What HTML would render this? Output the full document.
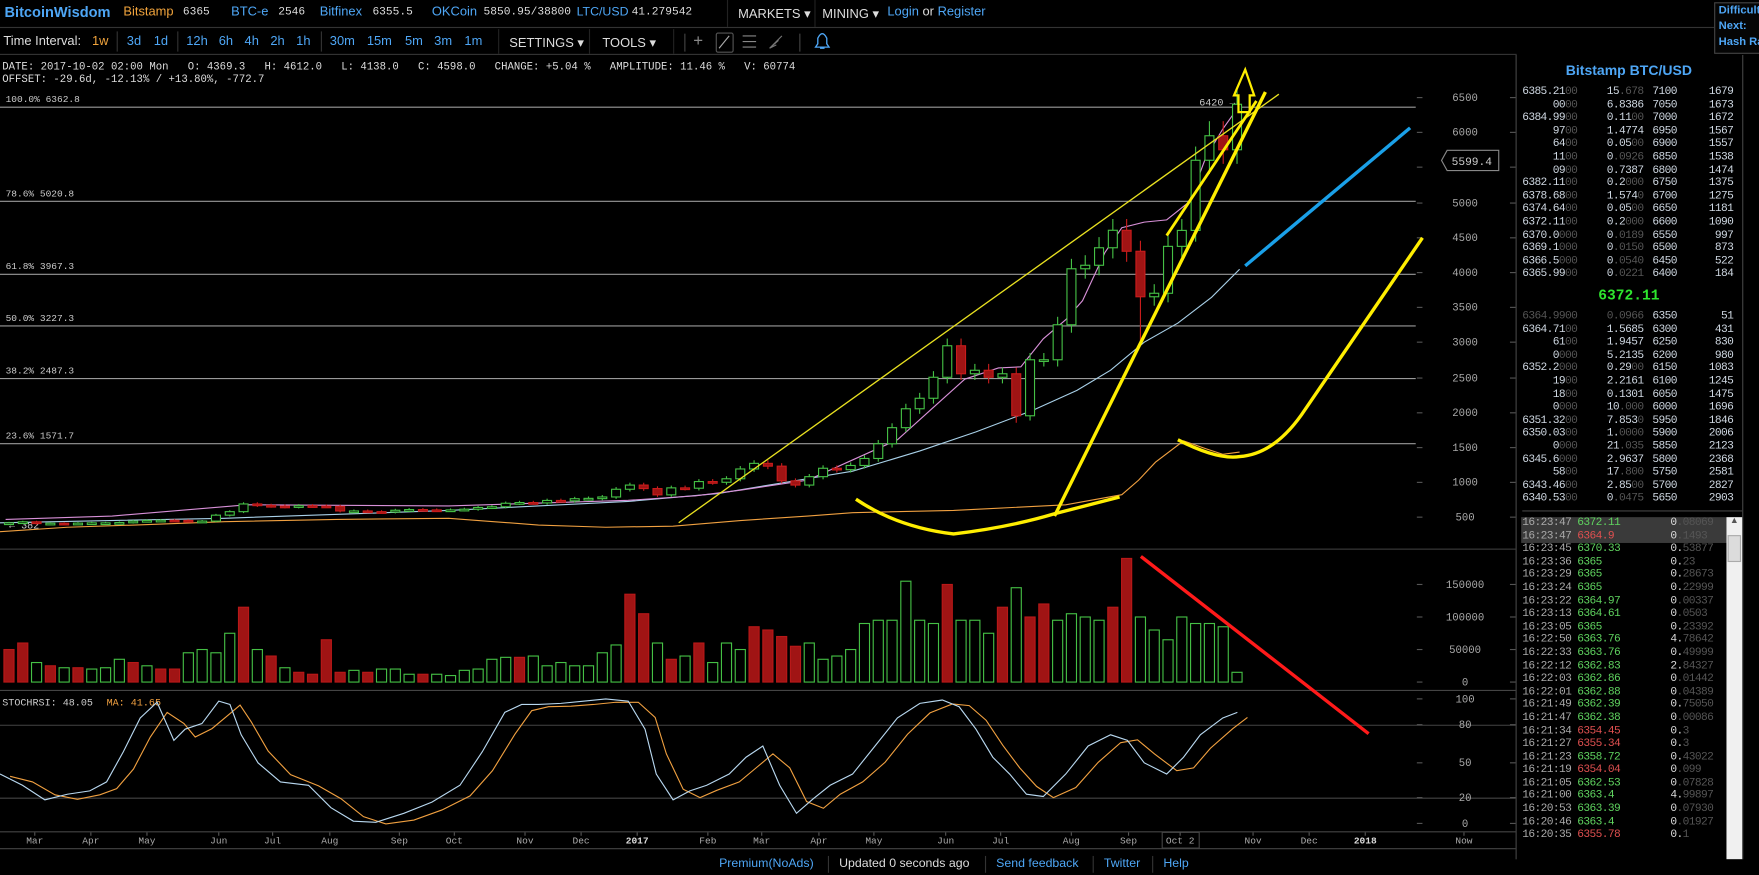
<!DOCTYPE html>
<html><head><meta charset="utf-8"><style>
html,body{margin:0;padding:0;background:#000;width:1759px;height:875px;overflow:hidden}
#w{position:absolute;left:0;top:0;width:1568px;height:780px;transform:scale(1.12181);transform-origin:0 0;background:#000;font-family:"Liberation Sans",sans-serif;color:#ddd;overflow:hidden}
.a{position:absolute;white-space:pre}
.b{color:#4ea6f5}
.m{font-family:"Liberation Mono",monospace}
.t1{font-size:11.5px;top:5px}
.n1{font-family:"Liberation Mono",monospace;font-size:10px;top:6px}
.t2{font-size:11.5px;top:31px}
.ob{position:absolute;font-family:"Liberation Mono",monospace;font-size:10px;letter-spacing:-0.55px;color:#cfd8e2;line-height:11.6px}
.d{color:#555}
.g{color:#5fd35f}.r{color:#e05050}
</style></head><body><div id="w">
<div class="a" style="left:0;top:24px;width:1568px;height:1px;background:#333"></div>
<div class="a" style="left:0;top:48px;width:1352px;height:1px;background:#333"></div>
<div class="a b" style="left:4px;top:3px;font-size:13px;font-weight:bold">BitcoinWisdom</div>
<div class="a t1" style="left:110px;color:#f0a33c">Bitstamp</div><div class="a n1" style="left:163px">6365</div>
<div class="a t1 b" style="left:206px">BTC-e</div><div class="a n1" style="left:248px">2546</div>
<div class="a t1 b" style="left:285px">Bitfinex</div><div class="a n1" style="left:332px">6355.5</div>
<div class="a t1 b" style="left:385px">OKCoin</div><div class="a n1" style="left:431px">5850.95/38800</div>
<div class="a t1 b" style="left:514px;font-size:11px">LTC/USD</div><div class="a n1" style="left:563px">41.279542</div>
<div class="a" style="left:648px;top:0;width:1px;height:24px;background:#222"></div>
<div class="a t1" style="left:658px">MARKETS ▾</div>
<div class="a" style="left:726px;top:0;width:1px;height:24px;background:#222"></div>
<div class="a t1" style="left:733px">MINING ▾</div>
<div class="a t1" style="left:791px"><span class="b">Login</span> or <span class="b">Register</span></div>
<div class="a" style="left:1528px;top:2px;width:40px;height:44px;border:1px solid #444;background:#050505"></div>
<div class="a b" style="left:1532px;top:3px;font-size:10px;font-weight:bold;line-height:14px">Difficult<br>Next:<br>Hash Ra</div>

<div class="a t2" style="left:3px">Time Interval:</div>
<div class="a t2" style="left:82px;color:#f0a33c">1w</div>
<div class="a" style="left:104px;top:28px;width:1px;height:18px;background:#333"></div>
<div class="a t2 b" style="left:113px">3d</div><div class="a t2 b" style="left:137px">1d</div>
<div class="a" style="left:158px;top:28px;width:1px;height:18px;background:#333"></div>
<div class="a t2 b" style="left:166px">12h</div><div class="a t2 b" style="left:195px">6h</div><div class="a t2 b" style="left:218px">4h</div><div class="a t2 b" style="left:241px">2h</div><div class="a t2 b" style="left:264px">1h</div>
<div class="a" style="left:286px;top:28px;width:1px;height:18px;background:#333"></div>
<div class="a t2 b" style="left:294px">30m</div><div class="a t2 b" style="left:327px">15m</div><div class="a t2 b" style="left:361px">5m</div><div class="a t2 b" style="left:387px">3m</div><div class="a t2 b" style="left:414px">1m</div>
<div class="a" style="left:444px;top:26px;width:1px;height:22px;background:#222"></div>
<div class="a t2" style="left:454px">SETTINGS ▾</div>
<div class="a" style="left:525px;top:26px;width:1px;height:22px;background:#222"></div>
<div class="a t2" style="left:537px">TOOLS ▾</div>
<div class="a" style="left:600px;top:26px;width:1px;height:22px;background:#222"></div>
<div class="a" style="left:610px;top:30px;width:1px;height:16px;background:#444"></div>
<div class="a" style="left:618px;top:28px;font-size:15px;color:#888">+</div>
<div class="a" style="left:638px;top:29px;width:14px;height:16px;border:1px solid #555;border-radius:2px"></div>
<svg class="a" style="left:0;top:0" width="760" height="48"><line x1="641" y1="43" x2="650" y2="32" stroke="#aaa"/><g stroke="#888"><line x1="662" y1="32" x2="674" y2="32"/><line x1="662" y1="37" x2="674" y2="37"/><line x1="662" y1="42" x2="674" y2="42"/></g><path d="M686 43 L697 32 M686 43 L694 36 M686 43 L692 40" stroke="#777" fill="none"/><line x1="713" y1="30" x2="713" y2="46" stroke="#444"/><path d="M727 42 L729 39 L729 34 Q731 30 733 30 Q735 30 737 34 L737 39 L739 42 Z M731 43 L735 43" stroke="#4ea6f5" fill="none" stroke-width="1.2"/></svg>

<div class="a m" style="left:2px;top:54px;font-size:9.5px;color:#ddd">DATE: 2017-10-02 02:00 Mon   O: 4369.3   H: 4612.0   L: 4138.0   C: 4598.0   CHANGE: +5.04 %   AMPLITUDE: 11.46 %   V: 60774</div>
<div class="a m" style="left:2px;top:65px;font-size:9.5px;color:#ddd">OFFSET: -29.6d, -12.13% / +13.80%, -772.7</div>

<svg id="ch" class="a" style="left:0;top:0" width="1568" height="780" font-family="Liberation Mono, monospace">
<g stroke="#9a9a9a" stroke-width="1">
<line x1="0" y1="95.5" x2="1262" y2="95.5"/><line x1="0" y1="179.5" x2="1262" y2="179.5"/><line x1="0" y1="244.5" x2="1262" y2="244.5"/><line x1="0" y1="290.5" x2="1262" y2="290.5"/><line x1="0" y1="337.5" x2="1262" y2="337.5"/><line x1="0" y1="395.5" x2="1262" y2="395.5"/>
</g>
<g fill="#ccc" font-size="8.5">
<text x="5" y="91">100.0% 6362.8</text><text x="5" y="175">78.6% 5020.8</text><text x="5" y="240">61.8% 3967.3</text><text x="5" y="286">50.0% 3227.3</text><text x="5" y="333">38.2% 2487.3</text><text x="5" y="391">23.6% 1571.7</text>
</g>
<g stroke="#444"><line x1="0" y1="489.5" x2="1351" y2="489.5"/><line x1="0" y1="615.5" x2="1351" y2="615.5"/><line x1="0" y1="646.5" x2="1351" y2="646.5"/><line x1="0" y1="711.5" x2="1351" y2="711.5"/><line x1="0" y1="741.5" x2="1351" y2="741.5"/><line x1="0" y1="756.5" x2="1351" y2="756.5"/>
<line x1="1351.5" y1="49" x2="1351.5" y2="780"/><line x1="1553.5" y1="49" x2="1553.5" y2="780"/><line x1="1357" y1="455.5" x2="1553" y2="455.5"/></g>
<g fill="#aaa" font-size="9.5" text-anchor="middle">
<text x="1306" y="90">6500</text><text x="1306" y="121">6000</text><text x="1306" y="184">5000</text><text x="1306" y="215">4500</text><text x="1306" y="246">4000</text><text x="1306" y="277">3500</text><text x="1306" y="308">3000</text><text x="1306" y="340">2500</text><text x="1306" y="371">2000</text><text x="1306" y="402">1500</text><text x="1306" y="433">1000</text><text x="1306" y="464">500</text>
<text x="1306" y="524">150000</text><text x="1306" y="553">100000</text><text x="1306" y="582">50000</text><text x="1306" y="611">0</text>
<text x="1306" y="626">100</text><text x="1306" y="649">80</text><text x="1306" y="683">50</text><text x="1306" y="714">20</text><text x="1306" y="737">0</text>
</g>
<g fill="#aaa" font-size="8.5" text-anchor="middle">
<text x="31" y="752">Mar</text><text x="81" y="752">Apr</text><text x="131" y="752">May</text><text x="195" y="752">Jun</text><text x="243" y="752">Jul</text><text x="294" y="752">Aug</text><text x="356" y="752">Sep</text><text x="405" y="752">Oct</text><text x="468" y="752">Nov</text><text x="518" y="752">Dec</text><text x="568" y="752" font-weight="bold" fill="#ddd">2017</text><text x="631" y="752">Feb</text><text x="679" y="752">Mar</text><text x="730" y="752">Apr</text><text x="779" y="752">May</text><text x="843" y="752">Jun</text><text x="892" y="752">Jul</text><text x="955" y="752">Aug</text><text x="1006" y="752">Sep</text><text x="1052" y="752">Oct 2</text><text x="1117" y="752">Nov</text><text x="1167" y="752">Dec</text><text x="1217" y="752" font-weight="bold" fill="#ddd">2018</text><text x="1305" y="752">Now</text>
</g>
<rect x="1036" y="742" width="33" height="14" fill="none" stroke="#444"/>
<g fill="#ccc" font-size="9">
<text x="2" y="629">STOCHRSI: 48.05</text><text x="95" y="629" fill="#f0a040">MA: 41.65</text>
<text x="1069" y="94">6420 →</text><text x="8" y="471">← 382</text>
</g>
<polygon points="1285,143 1290,134 1336,134 1336,152 1290,152" fill="#000" stroke="#888"/>
<text x="1312" y="147" fill="#ccc" font-size="10" text-anchor="middle">5599.4</text>
<g id="dyn"></g>
</svg>

<div class="a b" style="left:1351px;width:202px;text-align:center;top:56px;font-size:12.5px;font-weight:bold">Bitstamp BTC/USD</div>
<div class="ob" style="left:1354px;top:77px;width:52px;text-align:right">6385.21<span class="d">00</span><br>00<span class="d">00</span><br>6384.99<span class="d">00</span><br>97<span class="d">00</span><br>64<span class="d">00</span><br>11<span class="d">00</span><br>09<span class="d">00</span><br>6382.11<span class="d">00</span><br>6378.68<span class="d">00</span><br>6374.64<span class="d">00</span><br>6372.11<span class="d">00</span><br>6370.0<span class="d">000</span><br>6369.1<span class="d">000</span><br>6366.5<span class="d">000</span><br>6365.99<span class="d">00</span></div>
<div class="ob" style="left:1420px;top:77px;width:45px;text-align:right">15<span class="d">.678</span><br>6.8386<br>0.11<span class="d">00</span><br>1.4774<br>0.05<span class="d">00</span><br>0<span class="d">.0926</span><br>0.7387<br>0.2<span class="d">000</span><br>1.574<span class="d">0</span><br>0.05<span class="d">00</span><br>0.2<span class="d">000</span><br>0<span class="d">.0189</span><br>0<span class="d">.0150</span><br>0<span class="d">.0540</span><br>0<span class="d">.0221</span></div>
<div class="ob" style="left:1473px;top:77px">7100<br>7050<br>7000<br>6950<br>6900<br>6850<br>6800<br>6750<br>6700<br>6650<br>6600<br>6550<br>6500<br>6450<br>6400</div>
<div class="ob" style="left:1500px;top:77px;width:45px;text-align:right">1679<br>1673<br>1672<br>1567<br>1557<br>1538<br>1474<br>1375<br>1275<br>1181<br>1090<br>997<br>873<br>522<br>184</div>
<div class="a" style="left:1351px;width:202px;text-align:center;top:256px;font-size:13px;font-weight:bold;color:#2ee62e;font-family:'Liberation Mono',monospace">6372.11</div>
<div class="ob" style="left:1354px;top:277px;width:52px;text-align:right"><span class="d">6364.9900</span><br>6364.71<span class="d">00</span><br>61<span class="d">00</span><br>0<span class="d">000</span><br>6352.2<span class="d">000</span><br>19<span class="d">00</span><br>18<span class="d">00</span><br>0<span class="d">000</span><br>6351.32<span class="d">00</span><br>6350.03<span class="d">00</span><br>0<span class="d">000</span><br>6345.6<span class="d">000</span><br>58<span class="d">00</span><br>6343.46<span class="d">00</span><br>6340.53<span class="d">00</span></div>
<div class="ob" style="left:1420px;top:277px;width:45px;text-align:right"><span class="d">0.0966</span><br>1.5685<br>1.9457<br>5.2135<br>0.29<span class="d">00</span><br>2.2161<br>0.1301<br>10<span class="d">.000</span><br>7.853<span class="d">0</span><br>1.<span class="d">0000</span><br>21<span class="d">.035</span><br>2.9637<br>17<span class="d">.800</span><br>2.85<span class="d">00</span><br>0<span class="d">.0475</span></div>
<div class="ob" style="left:1473px;top:277px">6350<br>6300<br>6250<br>6200<br>6150<br>6100<br>6050<br>6000<br>5950<br>5900<br>5850<br>5800<br>5750<br>5700<br>5650</div>
<div class="ob" style="left:1500px;top:277px;width:45px;text-align:right">51<br>431<br>830<br>980<br>1083<br>1245<br>1475<br>1696<br>1846<br>2006<br>2123<br>2368<br>2581<br>2827<br>2903</div>

<div class="a" style="left:1356px;top:461px;width:183px;height:23px;background:#3a3a3a"></div>
<div class="a" style="left:1539px;top:461px;width:14px;height:305px;background:#f0f0f0"></div>
<div class="a" style="left:1540px;top:477px;width:12px;height:24px;background:#dcdcdc;border:1px solid #aaa;box-sizing:border-box"></div>
<div class="a" style="left:1542px;top:459px;font-size:8px;color:#555">▲</div>
<div class="ob" style="left:1357px;top:461px;color:#aaa">16:23:47<br>16:23:47<br>16:23:45<br>16:23:36<br>16:23:29<br>16:23:24<br>16:23:22<br>16:23:13<br>16:23:05<br>16:22:50<br>16:22:33<br>16:22:12<br>16:22:03<br>16:22:01<br>16:21:49<br>16:21:47<br>16:21:34<br>16:21:27<br>16:21:23<br>16:21:19<br>16:21:05<br>16:21:00<br>16:20:53<br>16:20:46<br>16:20:35</div>
<div class="ob" style="left:1406px;top:461px"><span class="g">6372.11</span><br><span class="r">6364.9</span><br><span class="g">6370.33</span><br><span class="g">6365</span><br><span class="g">6365</span><br><span class="g">6365</span><br><span class="g">6364.97</span><br><span class="g">6364.61</span><br><span class="g">6365</span><br><span class="g">6363.76</span><br><span class="g">6363.76</span><br><span class="g">6362.83</span><br><span class="g">6362.86</span><br><span class="g">6362.88</span><br><span class="g">6362.39</span><br><span class="g">6362.38</span><br><span class="r">6354.45</span><br><span class="r">6355.34</span><br><span class="g">6358.72</span><br><span class="r">6354.04</span><br><span class="g">6362.53</span><br><span class="g">6363.4</span><br><span class="g">6363.39</span><br><span class="g">6363.4</span><br><span class="r">6355.78</span></div>
<div class="ob" style="left:1489px;top:461px;color:#ddd">0<span class="d">.08069</span><br>0<span class="d">.1493</span><br>0.<span class="d">53877</span><br>0.<span class="d">23</span><br>0.<span class="d">28673</span><br>0.<span class="d">22999</span><br>0<span class="d">.00337</span><br>0<span class="d">.0503</span><br>0.<span class="d">23392</span><br>4.<span class="d">78642</span><br>0.<span class="d">49999</span><br>2.<span class="d">84327</span><br>0<span class="d">.01442</span><br>0<span class="d">.04389</span><br>0.<span class="d">75050</span><br>0<span class="d">.00086</span><br>0.<span class="d">3</span><br>0.<span class="d">3</span><br>0.<span class="d">43022</span><br>0<span class="d">.099</span><br>0<span class="d">.07828</span><br>4.<span class="d">99897</span><br>0<span class="d">.07930</span><br>0<span class="d">.01927</span><br>0.<span class="d">1</span></div>
<div class="a" style="left:0;top:766px;width:1568px;height:14px;background:#000"></div>

<div class="a" style="top:764px;left:641px;font-size:11px"><span class="b">Premium(NoAds)</span></div>
<div class="a" style="top:763px;left:738px;width:1px;height:15px;background:#333"></div>
<div class="a" style="top:764px;left:748px;font-size:11px;color:#ddd">Updated 0 seconds ago</div>
<div class="a" style="top:763px;left:878px;width:1px;height:15px;background:#333"></div>
<div class="a b" style="top:764px;left:888px;font-size:11px">Send feedback</div>
<div class="a" style="top:763px;left:974px;width:1px;height:15px;background:#333"></div>
<div class="a b" style="top:764px;left:984px;font-size:11px">Twitter</div>
<div class="a" style="top:763px;left:1027px;width:1px;height:15px;background:#333"></div>
<div class="a b" style="top:764px;left:1037px;font-size:11px">Help</div>

<script>
(function(){
var g=document.getElementById("dyn"),h="";
function Y(p){return 86.7+(6500-p)*0.0624}
function X(i){return 8+i*12.3}
var c=[420,435,410,415,412,416,420,420,425,445,455,458,455,442,445,530,580,690,670,660,650,665,660,655,590,590,580,575,600,610,605,600,605,615,640,650,700,710,705,740,735,765,770,790,900,960,
910,820,920,915,1010,1000,1050,1190,1270,1230,1020,960,1080,1200,1180,1240,1340,1550,1780,2050,2200,2500,2950,2550,2600,2500,2550,1950,2750,2750,3250,4050,4100,4350,4600,4300,3650,3700,4370,4598,5600,5950,5750,6400];
var tk="";
[31,81,131,195,243,294,356,405,468,518,568,631,679,730,779,843,892,955,1006,1052,1117,1167,1217,1305].forEach(function(x){tk+='<line x1="'+x+'" y1="742" x2="'+x+'" y2="745" stroke="#555"/>'});
[87,118,149,181,212,243,274,305,337,368,399,430,461,521,550,579,608,623,646,680,711,734].forEach(function(y){tk+='<line x1="1263" y1="'+y+'" x2="1268" y2="'+y+'" stroke="#555"/><line x1="1346" y1="'+y+'" x2="1351" y2="'+y+'" stroke="#555"/>'});
h+=tk;
h+='<polyline fill="none" stroke="#f0a040" stroke-width="1" points="0,474 60,470 120,468 200,465 300,463 400,462 440,465 480,468 540,470 600,469 660,464 720,460 760,457 850,455 950,450 1000,441 1015,428 1030,412 1055,393 1075,400 1090,405 1105,403"/>';
h+='<polyline fill="none" stroke="#a8d0e8" stroke-width="1" points="0,466 200,462 400,455 560,447 640,440 700,430 760,420 820,402 870,385 920,366 960,348 990,330 1020,305 1050,288 1080,265 1105,240"/>';
h+='<polyline fill="none" stroke="#d890d8" stroke-width="1" points="5,463 100,460 220,450 400,451 560,446 620,442 660,437 720,428 760,410 800,392 830,365 860,338 890,328 910,327 930,302 950,285 965,268 985,225 1000,203 1020,198 1040,196 1060,180 1075,140 1090,115 1105,94"/>';
for(var i=0;i<c.length;i++){var o=i?c[i-1]:415,cl=c[i],x=X(i),up=cl>=o;
 var hi=Math.max(o,cl)*1.035,lo=Math.min(o,cl)*0.965;if(i==82)lo=3000;if(i==73)lo=1850;
 var col=up?"#45c045":"#c81c1c";
 h+='<line x1="'+x+'" y1="'+Y(hi)+'" x2="'+x+'" y2="'+Y(lo)+'" stroke="'+col+'"/>';
 var t=Y(Math.max(o,cl)),bh=Math.max(1.5,Y(Math.min(o,cl))-t);
 h+='<rect x="'+(x-4)+'" y="'+t+'" width="8" height="'+bh+'" fill="'+(up?"#000":"#a01414")+'" stroke="'+col+'"/>';}
var v=[50,60,30,25,22,22,20,22,35,30,25,20,20,45,50,45,75,115,50,40,22,15,12,65,15,18,15,20,20,12,12,12,10,18,20,35,38,38,40,25,30,25,25,45,
57,135,105,60,35,40,60,30,60,50,85,80,70,55,60,35,40,50,90,95,95,155,95,90,150,95,95,75,115,145,100,120,95,105,100,95,115,190,100,80,65,100,90,90,85,15];
var red={0:1,1:1,3:1,5:1,9:1,11:1,12:1,17:1,19:1,21:1,22:1,23:1,24:1,26:1,30:1,37:1,45:1,46:1,48:1,50:1,54:1,55:1,56:1,57:1,68:1,72:1,74:1,75:1,80:1,81:1};
for(var i=0;i<v.length;i++){var x=X(i),hh=v[i]*0.58;
 h+='<rect x="'+(x-4.5)+'" y="'+(608-hh)+'" width="9" height="'+hh+'" fill="'+(red[i]?"#a01414":"#000")+'" stroke="'+(red[i]?"#b81818":"#45c045")+'"/>';}
var s=[[0,690],[20,700],[40,713],[60,708],[80,705],[95,697],[110,670],[125,640],[140,626],[155,660],[165,650],[180,645],[195,625],[205,628],[215,655],[230,680],[250,697],[275,700],[295,720],[315,732],[335,733],[360,725],[385,715],[410,700],[430,670],[450,635],[465,628],[480,628],[500,627],[520,625],[540,623],[560,625],[575,650],[585,690],[600,713],[615,705],[630,700],[650,690],[665,675],[680,665],[695,700],[710,725],[725,712],[740,700],[760,690],[780,665],[800,640],[820,627],[840,624],[855,630],[870,650],[885,675],[900,690],[915,708],[930,710],[950,690],[970,665],[990,655],[1005,660],[1020,680],[1040,690],[1055,675],[1070,655],[1090,640],[1103,635]];
var p1="",p2="";s.forEach(function(q,k){p1+=q[0]+","+q[1]+" ";var qy=q[1];if(k>0)qy=(q[1]+s[k-1][1])/2;p2+=(q[0]+9)+","+(qy+2)+" ";});
h+='<polyline fill="none" stroke="#f0a040" points="'+p2+'"/><polyline fill="none" stroke="#b8d8f0" points="'+p1+'"/>';
h+='<line x1="605" y1="466" x2="1140" y2="84" stroke="#e8e020" stroke-width="1.2"/>';
h+='<line x1="940" y1="460" x2="1128" y2="82" stroke="#ffee00" stroke-width="3"/>';
h+='<line x1="1040" y1="210" x2="1120" y2="90" stroke="#ffee00" stroke-width="2.5"/>';
h+='<path d="M763 445 Q800 470 850 476 Q900 470 940 458 L998 443" fill="none" stroke="#ffee00" stroke-width="3"/>';
h+='<path d="M1050 392 Q1085 410 1105 407 Q1135 405 1160 370 Q1215 290 1268 212" fill="none" stroke="#ffee00" stroke-width="3"/>';
h+='<path d="M1104 100 L1104 85 L1100 85 L1110 62 L1118 85 L1114 85 L1114 100 Z" fill="none" stroke="#ffee00" stroke-width="2"/>';
h+='<line x1="1110" y1="237" x2="1257" y2="114" stroke="#1aa0e8" stroke-width="3"/>';
h+='<line x1="1017" y1="496" x2="1220" y2="654" stroke="#ff1a1a" stroke-width="3"/>';
g.innerHTML=h;
})();
</script>
</div></body></html>
